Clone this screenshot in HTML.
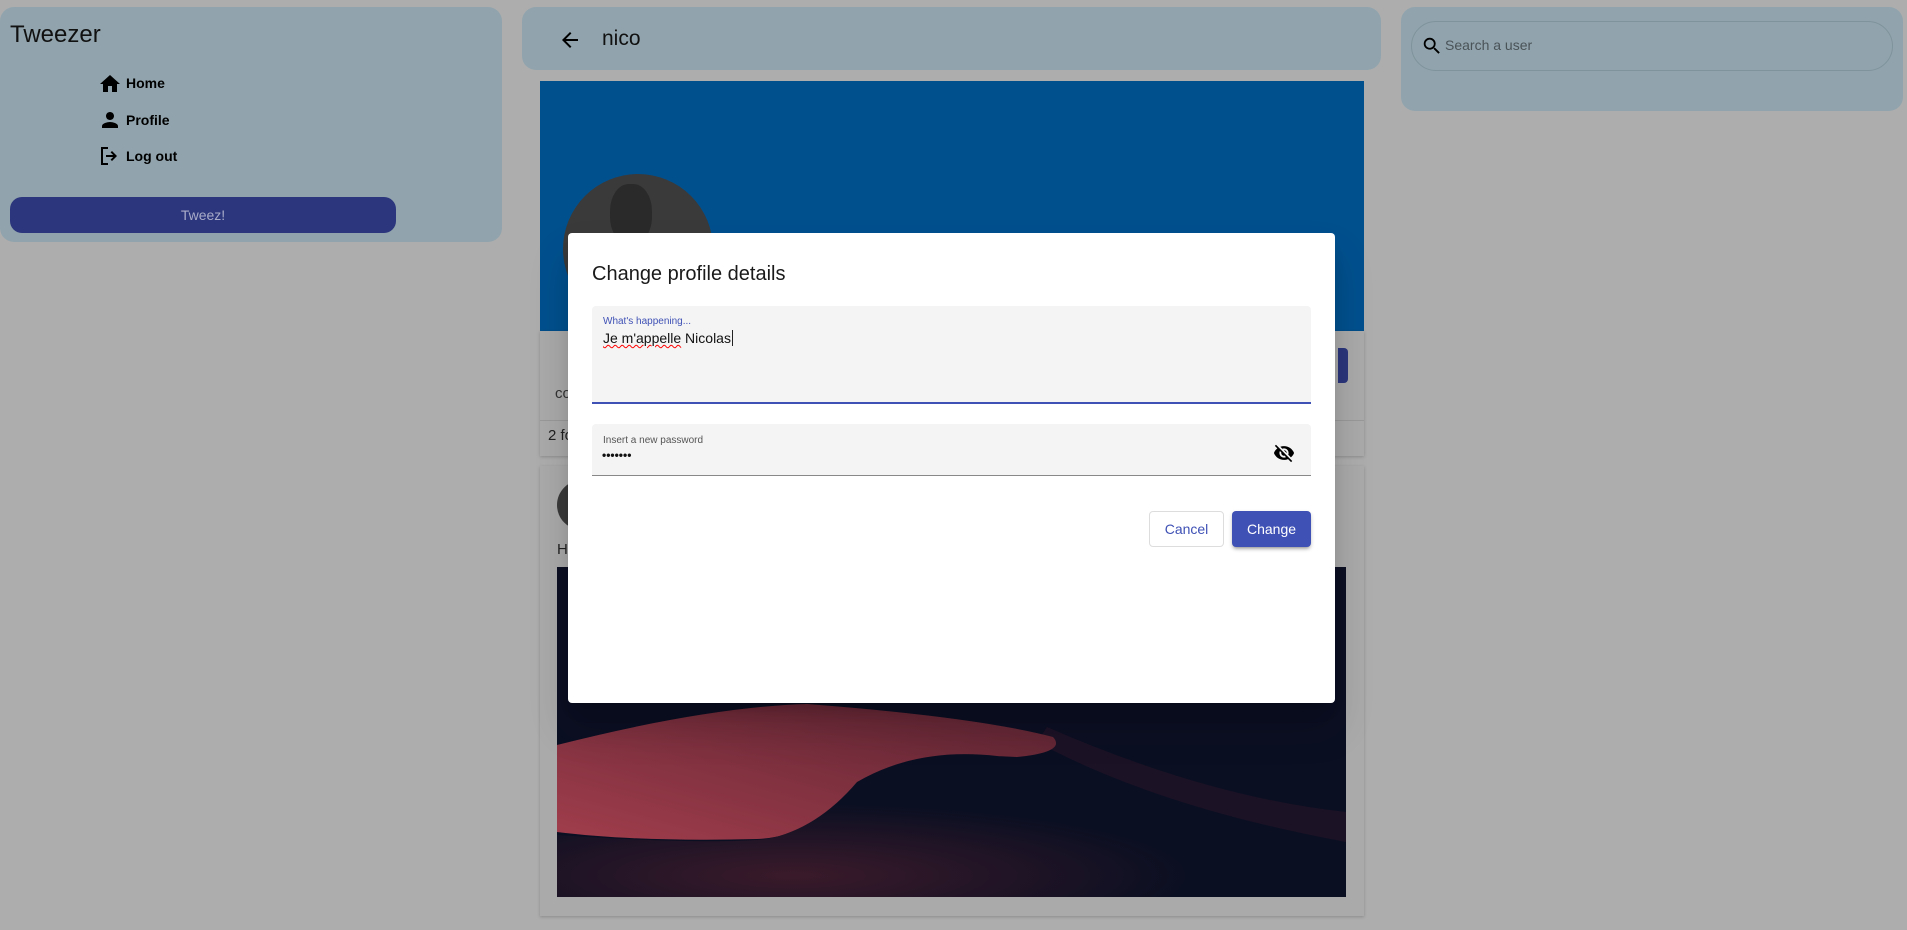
<!DOCTYPE html>
<html><head><meta charset="utf-8"><style>
*{box-sizing:border-box;margin:0;padding:0}
body{width:1907px;height:930px;background:#adadad;font-family:"Liberation Sans",sans-serif;position:relative;overflow:hidden;color:#000}
.a{position:absolute}
.panel{background:#91a4ad;border-radius:14px}
</style></head><body>
<div class="a panel" style="left:0;top:7px;width:502px;height:235px"></div>
<div class="a" style="left:10px;top:21px;font-size:24px;color:#111">Tweezer</div>
<svg class="a" style="left:98px;top:72px" width="24" height="24" viewBox="0 0 24 24"><path d="M10 20v-6h4v6h5v-8h3L12 3 2 12h3v8z"/></svg>
<div class="a" style="left:126px;top:75px;font-size:14px;font-weight:bold">Home</div>
<svg class="a" style="left:98px;top:108px" width="24" height="24" viewBox="0 0 24 24"><path d="M12 12c2.21 0 4-1.79 4-4s-1.79-4-4-4-4 1.79-4 4 1.79 4 4 4zm0 2c-2.67 0-8 1.34-8 4v2h16v-2c0-2.66-5.33-4-8-4z"/></svg>
<div class="a" style="left:126px;top:112px;font-size:14px;font-weight:bold">Profile</div>
<svg class="a" style="left:98px;top:144px" width="24" height="24" viewBox="0 0 24 24"><path d="M3 3h7v2H5v14h5v2H3z" /><path d="M14 7l-1.4 1.4 2.6 2.6H8v2h7.2l-2.6 2.6L14 17l5-5z"/></svg>
<div class="a" style="left:126px;top:148px;font-size:14px;font-weight:bold">Log out</div>
<div class="a" style="left:10px;top:197px;width:386px;height:36px;background:#2b367c;border-radius:12px;color:#a9acc9;font-size:14px;text-align:center;line-height:36px">Tweez!</div>

<div class="a panel" style="left:522px;top:7px;width:859px;height:63px"></div>
<svg class="a" style="left:558px;top:28px" width="24" height="24" viewBox="0 0 24 24"><path d="M20 11H7.83l5.59-5.59L12 4l-8 8 8 8 1.41-1.41L7.83 13H20v-2z"/></svg>
<div class="a" style="left:602px;top:27px;font-size:21px;font-weight:500;color:#111">nico</div>

<div class="a" style="left:540px;top:81px;width:824px;height:250px;background:#01508e"></div>
<div class="a" style="left:563px;top:174px;width:150px;height:150px;border-radius:50%;background:#3a3a3a"></div>
<div class="a" style="left:610px;top:184px;width:42px;height:60px;border-radius:45%;background:#2a2a2a"></div>
<div class="a" style="left:540px;top:331px;width:824px;height:125px;background:#aaa;box-shadow:0 1px 3px rgba(0,0,0,.2)"></div>
<div class="a" style="left:1338px;top:348px;width:10px;height:35px;background:#2b367c;border-radius:0 4px 4px 0"></div>
<div class="a" style="left:555px;top:385px;font-size:15px;color:#333">co</div>
<div class="a" style="left:540px;top:420px;width:824px;height:1px;background:#999"></div>
<div class="a" style="left:548px;top:427px;font-size:15px;color:#222">2 fo</div>
<div class="a" style="left:540px;top:466px;width:824px;height:450px;background:#aaa;box-shadow:0 1px 3px rgba(0,0,0,.2)"></div>
<div class="a" style="left:557px;top:480px;width:50px;height:50px;border-radius:50%;background:#3a3a3a"></div>
<div class="a" style="left:557px;top:541px;font-size:15px;color:#222">He</div>
<svg class="a" style="left:557px;top:567px" width="789" height="330" viewBox="0 0 789 330">
<defs><linearGradient id="g1" x1="0" y1="1" x2="1" y2="0"><stop offset="0" stop-color="#a13d4c"/><stop offset="1" stop-color="#5a2331"/></linearGradient>
<radialGradient id="gl" cx="0.3" cy="0.85" r="0.5"><stop offset="0" stop-color="#3a1a2a"/><stop offset="1" stop-color="#0b0f22"/></radialGradient></defs>
<rect width="789" height="330" fill="#0b0f22"/>
<path d="M490 160 Q650 230 789 245 L789 275 Q600 240 480 175Z" fill="#1c1226"/>
<path d="M0 178 Q150 140 250 137 Q420 150 496 170 Q510 185 460 190 Q380 185 330 205 Q260 270 200 272 Q80 275 0 265Z" fill="url(#g1)"/>
<path d="M300 215 Q360 180 440 189 Q600 230 789 285 L789 330 L0 330 L0 268 Q150 278 210 272 Q260 262 300 215Z" fill="url(#gl)"/>
</svg>

<div class="a panel" style="left:1401px;top:7px;width:502px;height:104px"></div>
<div class="a" style="left:1411px;top:21px;width:482px;height:50px;border:1px solid #7f939c;border-radius:25px"></div>
<svg class="a" style="left:1421px;top:35px" width="22" height="22" viewBox="0 0 24 24"><path d="M15.5 14h-.79l-.28-.27A6.470 6.47 0 0016 9.5 6.5 6.5 0 109.5 16c1.61 0 3.09-.59 4.23-1.57l.27.28v.79l5 4.99L20.490 19l-4.99-5zm-6 0C7.01 14 5 11.99 5 9.5S7.01 5 9.5 5 14 7.01 14 9.5 11.99 14 9.5 14z"/></svg>
<div class="a" style="left:1445px;top:37px;font-size:14px;color:#4a5358">Search a user</div>

<div class="a" style="left:568px;top:233px;width:767px;height:470px;background:#fff;border-radius:4px;box-shadow:0 11px 15px -7px rgba(0,0,0,.2),0 24px 38px 3px rgba(0,0,0,.14)"></div>
<div class="a" style="left:592px;top:263px;font-size:20px;font-weight:500;color:#1a1a1a">Change profile details</div>
<div class="a" style="left:592px;top:306px;width:719px;height:98px;background:#f4f4f4;border-radius:4px 4px 0 0;border-bottom:2px solid #3f51b5"></div>
<div class="a" style="left:603px;top:316px;font-size:10px;color:#3f51b5">What's happening...</div>
<div class="a" style="left:603px;top:330px;font-size:14px;color:#111"><span style="text-decoration:underline wavy red;text-decoration-thickness:1px">Je m'appelle</span> Nicolas<span style="border-left:1px solid #222;margin-left:1px"></span></div>
<div class="a" style="left:592px;top:424px;width:719px;height:52px;background:#f4f4f4;border-radius:4px 4px 0 0;border-bottom:1px solid #888"></div>
<div class="a" style="left:603px;top:435px;font-size:10px;color:#555">Insert a new password</div>
<div class="a" style="left:602px;top:448px;font-size:12px;color:#111;font-weight:bold">•••••••</div>
<svg class="a" style="left:1273px;top:442px" width="22" height="22" viewBox="0 0 24 24"><path d="M12 7c2.76 0 5 2.24 5 5 0 .65-.13 1.26-.36 1.83l2.92 2.92c1.51-1.26 2.7-2.89 3.43-4.750-1.73-4.39-6-7.5-11-7.5-1.4 0-2.74.25-3.98.7l2.16 2.16C10.74 7.13 11.35 7 12 7zM2 4.27l2.28 2.28.46.46C3.08 8.3 1.78 10.020 1 12c1.73 4.39 6 7.5 11 7.5 1.55 0 3.03-.3 4.38-.84l.42.42L19.73 22 21 20.73 3.27 3 2 4.27zM7.53 9.8l1.55 1.55c-.05.21-.08.43-.08.65 0 1.66 1.34 3 3 3 .22 0 .44-.03.65-.08l1.55 1.55c-.67.33-1.41.53-2.2.53-2.76 0-5-2.24-5-5 0-.79.2-1.53.53-2.2zm4.31-.78l3.15 3.15.02-.16c0-1.66-1.34-3-3-3l-.17.01z"/></svg>
<div class="a" style="left:1149px;top:511px;width:75px;height:36px;border:1px solid #ddd;border-radius:4px;color:#3f51b5;font-size:14px;font-weight:500;text-align:center;line-height:34px">Cancel</div>
<div class="a" style="left:1232px;top:511px;width:79px;height:36px;background:#3f51b5;border-radius:4px;color:#fff;font-size:14px;font-weight:500;text-align:center;line-height:36px;box-shadow:0 3px 3px -2px rgba(0,0,0,.3),0 2px 4px rgba(0,0,0,.2)">Change</div>
</body></html>
